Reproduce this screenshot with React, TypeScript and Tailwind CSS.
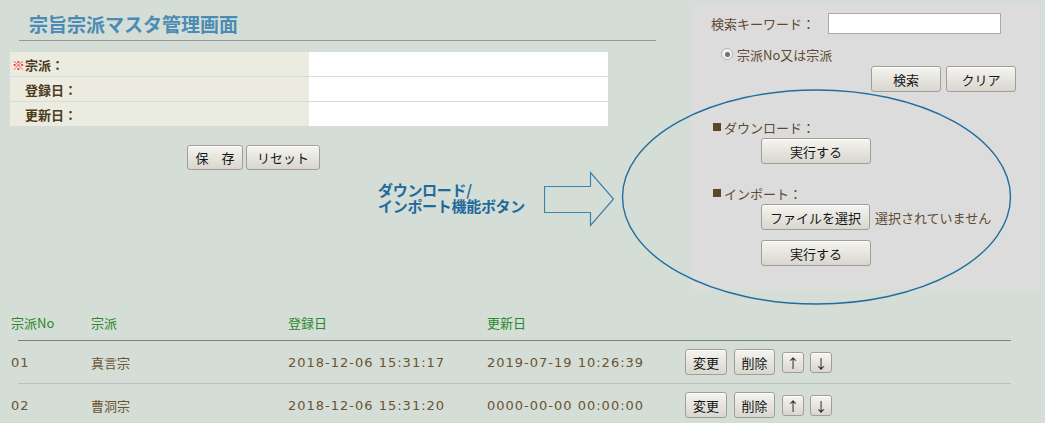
import React from "react";

const FONT = '"Noto Sans CJK JP", "Noto Sans", sans-serif';
const DATA_FONT = '"DejaVu Sans", "Noto Sans CJK JP", sans-serif';

const btn =
  "bg-linear-to-b from-[#f5f4f0] to-[#d9d6cf] border border-[#a29e96] rounded-[3px] text-[13px] text-[#151515] flex items-center justify-center leading-none whitespace-nowrap shadow-[inset_0_1px_0_#ffffff]";

function Btn({ w, h, children }: { w: string; h: string; children: React.ReactNode }) {
  return <div className={`${btn} ${w} ${h}`}>{children}</div>;
}

const rows = [
  { no: "01", name: "真言宗", reg: "2018-12-06 15:31:17", upd: "2019-07-19 10:26:39" },
  { no: "02", name: "曹洞宗", reg: "2018-12-06 15:31:20", upd: "0000-00-00 00:00:00" },
];

export default function App() {
  return (
    <div
      className="relative w-[1045px] h-[423px] overflow-hidden bg-[#d4ddd6]"
      style={{ fontFamily: FONT }}
    >
      {/* top section */}
      <div className="flex items-start h-[290px]">
        {/* left column */}
        <div className="w-[691px] shrink-0">
          <div className="ml-[19px] w-[637px] border-b border-[#9a9a9a] pl-[10px] pt-[12px] pb-[4px]">
            <div className="text-[19px] font-bold leading-[24px] text-[#4a8cb3]">宗旨宗派マスタ管理画面</div>
          </div>

          <div className="ml-[10px] mt-[11px] w-[598px] flex flex-col gap-px">
            {[
              { req: true, label: "宗派：" },
              { req: false, label: "登録日：" },
              { req: false, label: "更新日：" },
            ].map((r) => (
              <div key={r.label} className="flex h-[24px]">
                <div className="w-[299px] bg-[#ecebdf] flex items-center pl-[2px] text-[13px] font-bold text-[#4a3b1e] leading-none">
                  <span className="w-[13px] text-[#ff2a1a] font-normal text-[13px]">{r.req ? "※" : ""}</span>
                  <span>{r.label}</span>
                </div>
                <div className="flex-1 bg-white" />
              </div>
            ))}
          </div>

          <div className="flex gap-[3px] pl-[187px] mt-[19px]">
            <Btn w="w-[56px]" h="h-[25px]">保　存</Btn>
            <Btn w="w-[74px]" h="h-[25px]">リセット</Btn>
          </div>

          <div className="flex items-center pl-[378px] mt-[1px] h-[56px]">
            <div className="w-[166px] pb-[3px] text-[15px] font-bold leading-[16px] text-[#1d6a9b] tracking-[-0.3px] whitespace-nowrap">
              <div>ダウンロード/</div>
              <div>インポート機能ボタン</div>
            </div>
            <svg width="71" height="56" viewBox="0 0 71 56" className="shrink-0">
              <path
                d="M0.5 15.5 H46.5 V1.5 L69.5 28 L46.5 54.5 V41.5 H0.5 Z"
                fill="none"
                stroke="#3b82ad"
                strokeWidth="1.2"
              />
            </svg>
          </div>
        </div>

        {/* right panel */}
        <div className="mt-[3px] w-[349px] h-[287px] bg-[#dcdcdc] pl-[20px] pt-[10px] text-[13px] text-[#5e4b30]">
          <div className="flex items-center h-[21px]">
            <div className="w-[117px] leading-none">検索キーワード：</div>
            <div className="w-[173px] h-[21px] bg-white border border-[#a9a9a9]" />
          </div>
          <div className="flex items-center h-[16px] mt-[12px] pl-[10px]">
            <div className="w-[12px] h-[12px] rounded-full border border-[#b5b5b5] bg-[#f2f2f2] flex items-center justify-center">
              <div className="w-[5px] h-[5px] rounded-full bg-[#6e6e6e]" />
            </div>
            <span className="ml-[4px] leading-none">宗派No又は宗派</span>
          </div>
          <div className="flex gap-[5px] ml-[160px] mt-[4px]">
            <Btn w="w-[70px]" h="h-[26px]">検索</Btn>
            <Btn w="w-[70px]" h="h-[26px]">クリア</Btn>
          </div>

          <div className="ml-[2px] mt-[26px] h-[18px] flex items-center leading-none">
            <span className="inline-block w-[8px] h-[8px] bg-[#5a4526] mr-[3px]" />ダウンロード：
          </div>
          <div className="ml-[50px] mt-[2px]">
            <Btn w="w-[110px]" h="h-[26px]">実行する</Btn>
          </div>

          <div className="ml-[2px] mt-[20px] h-[18px] flex items-center leading-none">
            <span className="inline-block w-[8px] h-[8px] bg-[#5a4526] mr-[3px]" />インポート：
          </div>
          <div className="ml-[50px] mt-[2px] flex items-center">
            <Btn w="w-[109px]" h="h-[26px]">ファイルを選択</Btn>
            <span className="ml-[5px] leading-none">選択されていません</span>
          </div>
          <div className="ml-[50px] mt-[10px]">
            <Btn w="w-[110px]" h="h-[26px]">実行する</Btn>
          </div>
        </div>
      </div>

      {/* list table */}
      <div className="mt-[14px]">
        <div className="flex items-center h-[36px] pl-[11px] text-[13px] text-[#2a8a2a] leading-none">
          <div className="w-[80px]">宗派No</div>
          <div className="w-[197px]">宗派</div>
          <div className="w-[199px]">登録日</div>
          <div className="w-[198px]">更新日</div>
        </div>
        <div className="ml-[18px] w-[993px] h-px bg-[#808080]" />
        {rows.map((r, i) => (
          <React.Fragment key={r.no}>
            {i > 0 && <div className="ml-[18px] w-[993px] h-px bg-[#bdbfbd]" />}
            <div
              className="flex items-center h-[42px] pl-[11px] text-[13px] text-[#6a5432] leading-none tracking-[1px]"
              style={{ fontFamily: DATA_FONT }}
            >
              <div className="w-[80px]">{r.no}</div>
              <div className="w-[197px] tracking-normal" style={{ fontFamily: FONT }}>
                {r.name}
              </div>
              <div className="w-[199px]">{r.reg}</div>
              <div className="w-[198px]">{r.upd}</div>
              <div className="flex items-center tracking-normal" style={{ fontFamily: FONT }}>
                <Btn w="w-[42px]" h="h-[26px]">変更</Btn>
                <div className="ml-[7px]">
                  <Btn w="w-[41px]" h="h-[26px]">削除</Btn>
                </div>
                <div className="ml-[7px]">
                  <Btn w="w-[22px]" h="h-[21px]">↑</Btn>
                </div>
                <div className="ml-[6px]">
                  <Btn w="w-[22px]" h="h-[21px]">↓</Btn>
                </div>
              </div>
            </div>
          </React.Fragment>
        ))}
      </div>

      {/* annotation ellipse */}
      <svg
        className="absolute left-0 top-0 pointer-events-none"
        width="1045"
        height="423"
        viewBox="0 0 1045 423"
      >
        <ellipse cx="816.5" cy="197" rx="194" ry="107" fill="none" stroke="#1f6e9f" strokeWidth="1.4" />
      </svg>
    </div>
  );
}
